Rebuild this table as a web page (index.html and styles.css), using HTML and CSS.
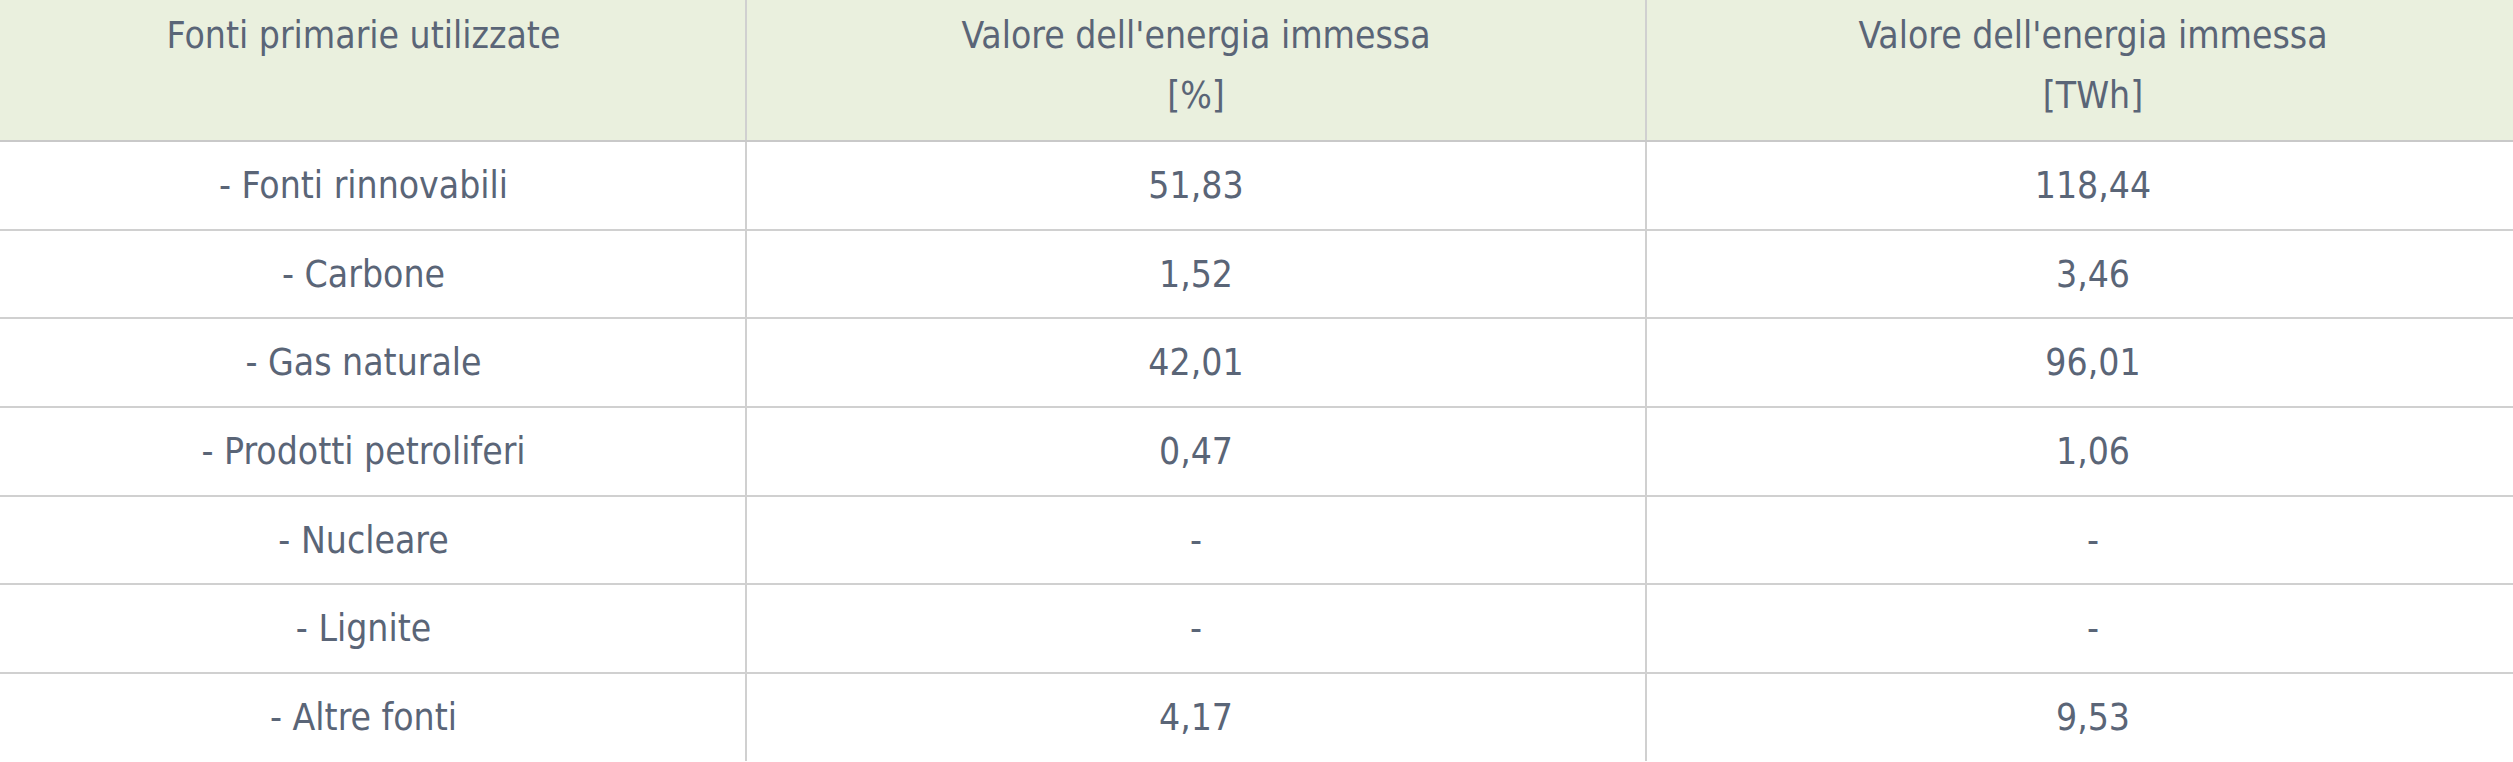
FILE: index.html
```html
<!DOCTYPE html>
<html lang="it">
<head>
<meta charset="utf-8">
<title>Fonti primarie utilizzate</title>
<link rel="stylesheet" href="styles.css">
</head>
<body>
<table class="mix">
  <colgroup>
    <col class="c1">
    <col class="c2">
    <col class="c3">
  </colgroup>
  <thead>
    <tr>
      <th>Fonti primarie utilizzate</th>
      <th>Valore dell'energia immessa<br>[%]</th>
      <th>Valore dell'energia immessa<br>[TWh]</th>
    </tr>
  </thead>
  <tbody>
    <tr><td>- Fonti rinnovabili</td><td>51,83</td><td>118,44</td></tr>
    <tr><td>- Carbone</td><td>1,52</td><td>3,46</td></tr>
    <tr><td>- Gas naturale</td><td>42,01</td><td>96,01</td></tr>
    <tr><td>- Prodotti petroliferi</td><td>0,47</td><td>1,06</td></tr>
    <tr><td>- Nucleare</td><td>-</td><td>-</td></tr>
    <tr><td>- Lignite</td><td>-</td><td>-</td></tr>
    <tr><td>- Altre fonti</td><td>4,17</td><td>9,53</td></tr>
  </tbody>
</table>
</body>
</html>
```
FILE: styles.css
```css
html, body {
  margin: 0;
  padding: 0;
  background: #ffffff;
}

.mix {
  width: 2513px;
  table-layout: fixed;
  border-collapse: collapse;
  font-family: "DejaVu Sans Condensed", "Liberation Sans Narrow", "Liberation Sans", sans-serif;
  font-size: 37px;
  line-height: 60px;
  color: #5a6577;
}

.c1 { width: 746px; }
.c2 { width: 900px; }
.c3 { width: 867px; }

.mix th {
  font-weight: normal;
  background: #eaf0de;
  vertical-align: top;
  text-align: center;
  padding: 6px 0 14px;
  border-left: 2px solid #d0d0d0;
  border-bottom: 2px solid #c9c9c9;
}

.mix td {
  text-align: center;
  vertical-align: top;
  padding: 14px 0 12.7px;
  border-left: 2px solid #d0d0d0;
  border-top: 2px solid #d0d0d0;
}

.mix th:first-child,
.mix td:first-child {
  border-left: none;
  padding-right: 18px;
}

.mix th:last-child,
.mix td:last-child {
  padding-left: 26px;
}
```
